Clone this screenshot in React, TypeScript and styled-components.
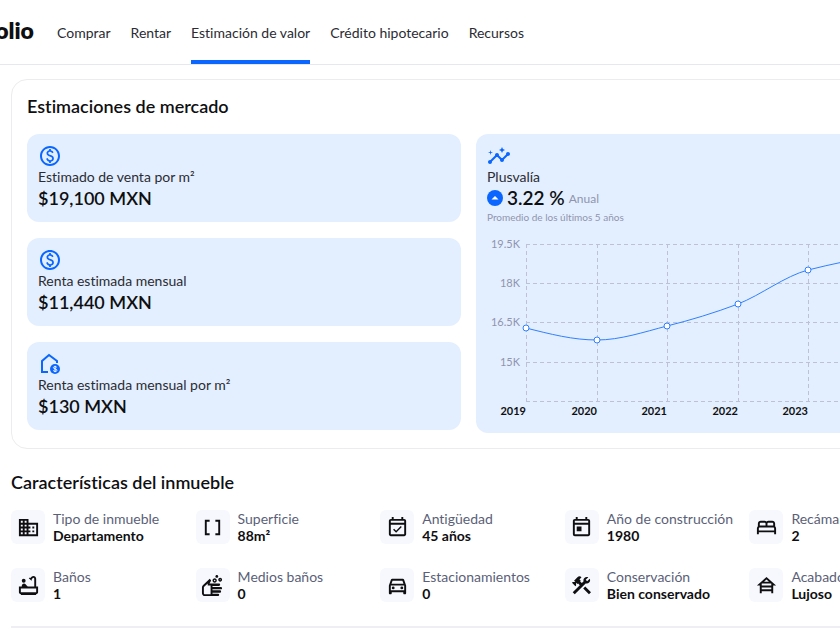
import React from 'react';
import styled, { createGlobalStyle } from 'styled-components';
import type { IconType } from 'react-icons';
import {
  MdConstruction,
  MdDataArray,
  MdDomain,
  MdHouseSiding,
  MdInsights,
  MdOutlineBathtub,
  MdOutlineBed,
  MdOutlineDirectionsCar,
  MdOutlineEventAvailable,
  MdOutlinePaid,
  MdOutlineSoap,
  MdOutlineToday,
} from 'react-icons/md';

const color = {
  ink: '#0f0f12',
  text: '#2b2c33',
  label: '#5b5f78',
  muted: '#9094ae',
  blue: '#0a66ff',
  tint: '#e3efff',
  line: '#e6e8ee',
  iconBg: '#f6f8fd',
};

const GlobalStyle = createGlobalStyle`
  *, *::before, *::after { box-sizing: border-box; }
  body {
    margin: 0;
    background: #fff;
    color: ${color.ink};
    font-family: Lato, 'Open Sans', sans-serif;
    font-variant-ligatures: none;
    font-size: 14px;
  }
`;

const Page = styled.div`
  overflow: hidden;
`;

const Header = styled.header`
  display: flex;
  align-items: stretch;
  gap: 23px;
  border-bottom: 1px solid ${color.line};
`;

const Logo = styled.a`
  display: flex;
  align-items: center;
  justify-content: flex-end;
  width: 34px;
  padding-bottom: 4px;
  overflow: hidden;
  color: ${color.ink};
  font-size: 23px;
  font-weight: 800;
  line-height: 28px;
  text-decoration: none;
`;

const Nav = styled.nav`
  display: flex;
  gap: 20px;
`;

const NavLink = styled.a<{ $active?: boolean }>`
  padding: 23px 0 17px;
  border-bottom: 4px solid ${(p) => (p.$active ? color.blue : 'transparent')};
  color: ${color.text};
  line-height: 20px;
  text-decoration: none;
  white-space: nowrap;
`;

const Main = styled.main`
  min-width: 937px;
  padding: 14px 11px 0;
`;

const Card = styled.section`
  padding: 15px;
  border: 1px solid #ececef;
  border-radius: 16px;
`;

const Title = styled.h2`
  margin: 0 0 16px;
  font-size: 18px;
  font-weight: 600;
  line-height: 23px;
`;

const Columns = styled.div`
  display: grid;
  grid-template-columns: 1fr 1fr;
  align-items: start;
  gap: 15px;
`;

const Stack = styled.div`
  display: grid;
  gap: 16px;
`;

const Tile = styled.article`
  padding: 10px 11px 12px;
  border-radius: 12px;
  background: ${color.tint};
`;

const TileIcon = styled.div`
  display: flex;
  height: 24px;
  color: ${color.blue};
  font-size: 24px;
`;

const TileLabel = styled.h3`
  margin: 0;
  color: ${color.text};
  font-size: 14px;
  font-weight: 400;
  line-height: 18px;
`;

const Value = styled.p<{ $large?: boolean }>`
  margin: 0;
  color: ${color.ink};
  font-size: ${(p) => (p.$large ? 19 : 18)}px;
  font-weight: 600;
  line-height: 24px;
`;

const GrowthRow = styled.div`
  display: flex;
  align-items: center;
  gap: 4px;
  color: ${color.muted};
  font-size: 12px;
`;

const Note = styled.p`
  margin: 0;
  color: ${color.muted};
  font-size: 10px;
  line-height: 14px;
`;

const ChartSvg = styled.svg`
  display: block;
  overflow: visible;
`;

const LevelLabels = styled.g`
  fill: ${color.muted};
  font-size: 11px;
  text-anchor: end;
`;

const YearLabels = styled.g`
  fill: ${color.ink};
  font-size: 11px;
  font-weight: 700;
  text-anchor: end;
`;

const Features = styled.section`
  margin-top: 22px;
  padding-bottom: 24px;
  border-bottom: 2px solid #eeeef3;
`;

const FeatureGrid = styled.div`
  display: grid;
  grid-template-columns: repeat(5, 1fr);
  gap: 24px 8px;
`;

const Feature = styled.div`
  display: flex;
  gap: 8px;
`;

const FeatureIcon = styled.span`
  display: grid;
  flex: none;
  place-items: center;
  width: 34px;
  height: 34px;
  border-radius: 6px;
  background: ${color.iconBg};
  font-size: 23px;
`;

const FeatureText = styled.dl`
  margin: 0;
  line-height: 17px;
  white-space: nowrap;
`;

const FeatureName = styled.dt`
  color: ${color.label};
`;

const FeatureValue = styled.dd`
  margin: 0;
  font-weight: 700;
`;

const HouseValueIcon = () => (
  <svg width="24" height="24" viewBox="0 0 24 24" fill="none" aria-hidden="true">
    <path d="M10 20H4V9l7-6 8 6v2" stroke="currentColor" strokeWidth="2" />
    <circle cx="17" cy="17" r="5" fill="currentColor" />
    <path
      d="M18.8 15.4c-.3-.6-.9-.8-1.7-.8-1 0-1.7.4-1.7 1.1 0 1.7 3.6.7 3.6 2.5 0 .8-.8 1.2-1.8 1.2-.9 0-1.7-.3-2-1M17.1 13.8v6.4"
      stroke="#fff"
      strokeWidth="1"
    />
  </svg>
);

const UpBadge = () => (
  <svg width="16" height="16" viewBox="0 0 16 16" role="img" aria-label="Al alza">
    <circle cx="8" cy="8" r="8" fill={color.blue} />
    <path d="M4.5 9.5 8 6l3.5 3.5z" fill="#fff" />
  </svg>
);

const points = [
  { year: 2019, x: 39, y: 104 },
  { year: 2020, x: 110, y: 116 },
  { year: 2021, x: 180, y: 102 },
  { year: 2022, x: 251, y: 80 },
  { year: 2023, x: 321, y: 46 },
  { year: 2024, x: 392, y: 32 },
];

const levels = [
  { text: '19.5K', y: 20 },
  { text: '18K', y: 59 },
  { text: '16.5K', y: 98 },
  { text: '15K', y: 138 },
  { text: '', y: 177 },
];

const PriceChart = () => (
  <ChartSvg width="412" height="197" role="img" aria-label="Precio por año">
    <g stroke="#bcc1d6" strokeDasharray="4 3" shapeRendering="crispEdges">
      {levels.map((l) => (
        <line key={l.y} x1="39" x2="392" y1={l.y} y2={l.y} />
      ))}
      {points.map((p) => (
        <line key={p.year} x1={p.x} x2={p.x} y1="20" y2="177" />
      ))}
    </g>
    <LevelLabels>
      {levels.map((l) => (
        <text key={l.y} x="33" y={l.y + 4}>
          {l.text}
        </text>
      ))}
    </LevelLabels>
    <YearLabels>
      {points.map((p) => (
        <text key={p.year} x={p.x} y="191">
          {p.year}
        </text>
      ))}
    </YearLabels>
    <path
      d="M39 104C63 110 86 116 110 116C133 116 157 108 180 102C204 96 227 89 251 80C274 71 298 52 321 46C345 40 368 35 392 32"
      fill="none"
      stroke="#2f80ff"
    />
    {points.map((p) => (
      <circle key={p.year} cx={p.x} cy={p.y} r="3" fill="#fff" stroke="#2f80ff" />
    ))}
  </ChartSvg>
);

const nav = ['Comprar', 'Rentar', 'Estimación de valor', 'Crédito hipotecario', 'Recursos'];

const estimates = [
  { icon: <MdOutlinePaid />, label: 'Estimado de venta por m²', value: '$19,100 MXN' },
  { icon: <MdOutlinePaid />, label: 'Renta estimada mensual', value: '$11,440 MXN' },
  { icon: <HouseValueIcon />, label: 'Renta estimada mensual por m²', value: '$130 MXN' },
];

const features: { icon: IconType; name: string; value: string }[] = [
  { icon: MdDomain, name: 'Tipo de inmueble', value: 'Departamento' },
  { icon: MdDataArray, name: 'Superficie', value: '88m²' },
  { icon: MdOutlineEventAvailable, name: 'Antigüedad', value: '45 años' },
  { icon: MdOutlineToday, name: 'Año de construcción', value: '1980' },
  { icon: MdOutlineBed, name: 'Recámaras', value: '2' },
  { icon: MdOutlineBathtub, name: 'Baños', value: '1' },
  { icon: MdOutlineSoap, name: 'Medios baños', value: '0' },
  { icon: MdOutlineDirectionsCar, name: 'Estacionamientos', value: '0' },
  { icon: MdConstruction, name: 'Conservación', value: 'Bien conservado' },
  { icon: MdHouseSiding, name: 'Acabados', value: 'Lujoso' },
];

export default function App() {
  return (
    <Page>
      <GlobalStyle />
      <Header>
        <Logo href="#">olio</Logo>
        <Nav>
          {nav.map((item) => (
            <NavLink key={item} href="#" $active={item === 'Estimación de valor'}>
              {item}
            </NavLink>
          ))}
        </Nav>
      </Header>
      <Main>
        <Card>
          <Title>Estimaciones de mercado</Title>
          <Columns>
            <Stack>
              {estimates.map((e) => (
                <Tile key={e.label}>
                  <TileIcon>{e.icon}</TileIcon>
                  <TileLabel>{e.label}</TileLabel>
                  <Value>{e.value}</Value>
                </Tile>
              ))}
            </Stack>
            <Tile>
              <TileIcon>
                <MdInsights />
              </TileIcon>
              <TileLabel>Plusvalía</TileLabel>
              <GrowthRow>
                <UpBadge />
                <Value $large>3.22 %</Value>
                Anual
              </GrowthRow>
              <Note>Promedio de los últimos 5 años</Note>
              <PriceChart />
            </Tile>
          </Columns>
        </Card>
        <Features>
          <Title>Características del inmueble</Title>
          <FeatureGrid>
            {features.map(({ icon: Icon, name, value }) => (
              <Feature key={name}>
                <FeatureIcon aria-hidden="true">
                  <Icon />
                </FeatureIcon>
                <FeatureText>
                  <FeatureName>{name}</FeatureName>
                  <FeatureValue>{value}</FeatureValue>
                </FeatureText>
              </Feature>
            ))}
          </FeatureGrid>
        </Features>
      </Main>
    </Page>
  );
}
